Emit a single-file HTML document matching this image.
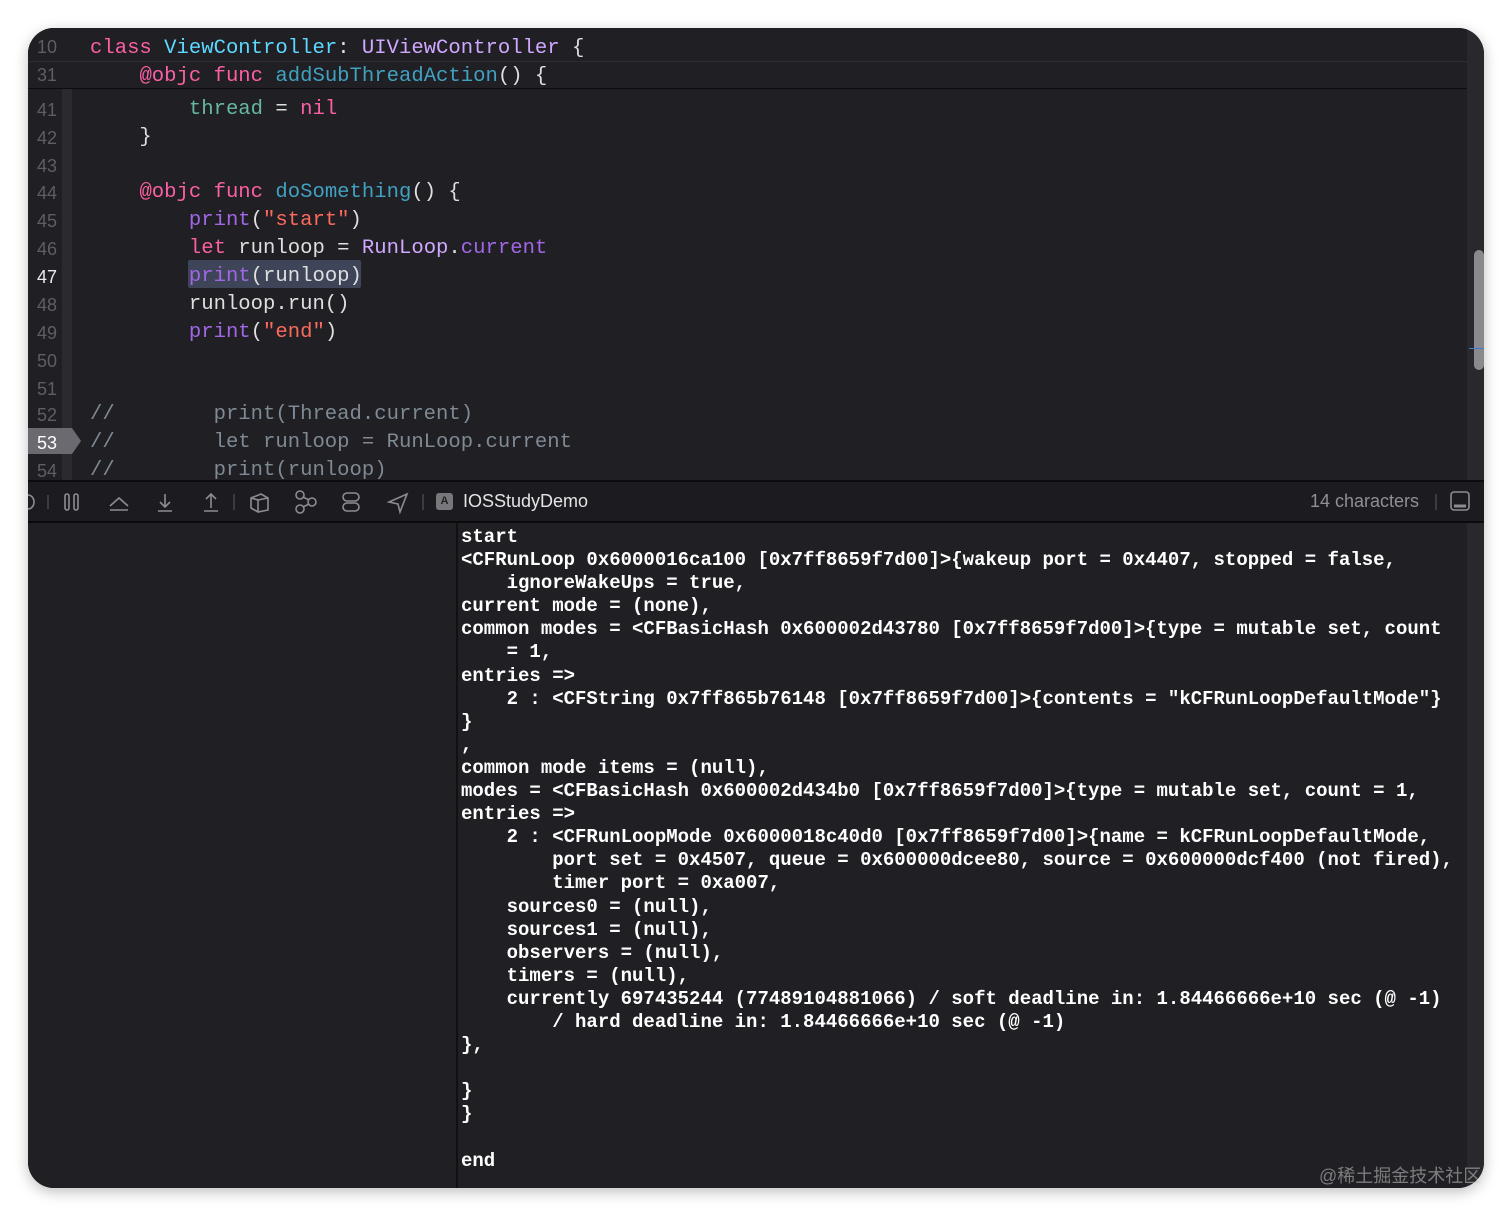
<!DOCTYPE html>
<html><head><meta charset="utf-8"><style>
*{margin:0;padding:0;box-sizing:border-box}
body{width:1512px;height:1216px;background:#fff;position:relative;overflow:hidden;font-family:"Liberation Mono",monospace}
#win{position:absolute;left:28px;top:28px;width:1456px;height:1160px;border-radius:26px;background:#1f1f24;overflow:hidden;box-shadow:0 4px 14px rgba(0,0,0,.25)}
.ed{position:absolute;left:0;top:0;width:1440px;height:452px;background:#1f1f24}
.ln{position:absolute;left:0;width:29px;text-align:right;font-size:18px;color:#5d5f66;font-family:"Liberation Sans Narrow","Liberation Sans",sans-serif;margin-top:2px}
.cl{position:absolute;left:62px;font-size:20.6px;white-space:pre;color:#dfdfe0;line-height:26px;margin-top:3px}
.k{color:#fc5fa3}.t{color:#5dd8ff}.p{color:#d0a8ff}.f{color:#41a1c0}.g{color:#67b7a4}.m{color:#a167e6}.s{color:#fc6a5d}.c{color:#7f8a94}
.hdr{position:absolute;left:0;top:0;width:1440px;height:61px;background:#1f1f24;border-bottom:1px solid #0c0c0e}
.gut{position:absolute;left:34px;top:61px;width:10px;height:391px;background:#2a2a2f}
#tb{position:absolute;left:0;top:452px;width:1456px;height:43px;background:#1c1c20;border-top:2px solid #0b0b0d;border-bottom:2px solid #0b0b0d;color:#8c8c91}
#con{position:absolute;left:428px;top:495px;width:1011px;height:665px;background:#1f1f24;border-left:2px solid #111}
#vars{position:absolute;left:0;top:495px;width:428px;height:665px;background:#1f1f24}
#strip{position:absolute;left:1439px;top:0;width:17px;height:1160px;background:#29292d}
pre{font-family:"Liberation Mono",monospace;font-weight:bold;font-size:19px;line-height:23.1px;color:#fff;position:absolute;left:3px;top:3px}
</style></head><body>
<div id="win">
<div class="ed">
<div class="gut"></div>
<div style="position:absolute;left:0;top:400px;width:44px;height:26px;background:#6a6a70"></div>
<div style="position:absolute;left:44px;top:400px;width:0;height:0;border-top:13px solid transparent;border-bottom:13px solid transparent;border-left:9px solid #6a6a70"></div>
<div class="hdr"></div>
<div style="position:absolute;left:0;top:33px;width:1440px;height:28px;border-top:1px solid #2c2c31"></div>
<div class="ln" style="top:7px">10</div><div class="cl" style="top:5px"><span class="k">class</span> <span class="t">ViewController</span>: <span class="p">UIViewController</span> {</div>
<div class="ln" style="top:35px">31</div><div class="cl" style="top:33px">    <span class="k">@objc</span> <span class="k">func</span> <span class="f">addSubThreadAction</span>() {</div>
<div class="ln" style="top:70px">41</div><div class="cl" style="top:66px">        <span class="g">thread</span> = <span class="k">nil</span></div>
<div class="ln" style="top:98px">42</div><div class="cl" style="top:94px">    }</div>
<div class="ln" style="top:126px">43</div>
<div class="ln" style="top:153px">44</div><div class="cl" style="top:149px">    <span class="k">@objc</span> <span class="k">func</span> <span class="f">doSomething</span>() {</div>
<div class="ln" style="top:181px">45</div><div class="cl" style="top:177px">        <span class="m">print</span>(<span class="s">"start"</span>)</div>
<div class="ln" style="top:209px">46</div><div class="cl" style="top:205px">        <span class="k">let</span> runloop = <span class="p">RunLoop</span>.<span class="m">current</span></div>
<div style="position:absolute;left:160px;top:232px;width:173px;height:28px;background:#3f4558;border-radius:2px"></div>
<div class="ln" style="top:237px;color:#e8e8ea">47</div><div class="cl" style="top:233px">        <span class="m">print</span>(runloop)</div>
<div class="ln" style="top:265px">48</div><div class="cl" style="top:261px">        runloop.run()</div>
<div class="ln" style="top:293px">49</div><div class="cl" style="top:289px">        <span class="m">print</span>(<span class="s">"end"</span>)</div>
<div class="ln" style="top:321px">50</div>
<div class="ln" style="top:349px">51</div>
<div class="ln" style="top:375px">52</div><div class="cl c" style="top:371px">//        print(Thread.current)</div>
<div class="ln" style="top:403px;color:#fff">53</div><div class="cl c" style="top:399px">//        let runloop = RunLoop.current</div>
<div class="ln" style="top:431px">54</div><div class="cl c" style="top:427px">//        print(runloop)</div>
</div>
<div id="strip"><div style="position:absolute;left:7px;top:222px;width:10px;height:120px;border-radius:5px;background:#8a8a8e"></div><div style="position:absolute;left:2px;top:320px;width:15px;height:1px;background:#3a7bd5"></div></div>
<div id="tb">
<svg width="1456" height="39" style="position:absolute;left:0;top:0" fill="none" stroke="#8c8c91" stroke-width="1.6">
<path d="M0 13 A6 7 0 0 1 0 27"/><line x1="20" y1="13" x2="20" y2="27" stroke="#444"/>
<rect x="37" y="12" width="4" height="16" rx="2"/><rect x="46" y="12" width="4" height="16" rx="2"/>
<path d="M82 24 L91 16 L100 24 M82 28 H100" /><path d="M137 12 V24 M132 20 L137 25 L142 20 M130 29 H144"/>
<path d="M183 26 V13 M178 17 L183 12 L188 17 M176 29 H190"/><line x1="206" y1="12" x2="206" y2="28" stroke="#444"/>
<path d="M223 16 L233 12 L240 16 V28 L230 30 L223 26 Z M230 30 V18 L223 16 M230 18 L240 16"/>
<circle cx="272" cy="13" r="4"/><circle cx="272" cy="27" r="4"/><circle cx="284" cy="20" r="4"/><path d="M275 15 L281 18 M275 25 L281 22"/>
<rect x="315" y="11" width="16" height="8" rx="4"/><rect x="315" y="21" width="16" height="8" rx="4"/>
<path d="M361 20 L379 12 L372 30 L370 22 Z"/><line x1="395" y1="12" x2="395" y2="28" stroke="#444"/>
<rect x="1423" y="10" width="18" height="18" rx="3"/><line x1="1426" y1="24" x2="1438" y2="24" stroke-width="3"/>
<line x1="1408" y1="12" x2="1408" y2="28" stroke="#444"/>
</svg>
<div style="position:absolute;left:408px;top:11px;width:17px;height:17px;background:#77777c;border-radius:3px;color:#222;font:bold 11px 'Liberation Sans',sans-serif;text-align:center;line-height:17px">A</div>
<div style="position:absolute;left:435px;top:9px;font:18px 'Liberation Sans',sans-serif;color:#e4e4e6">IOSStudyDemo</div>
<div style="position:absolute;left:1282px;top:9px;font:18px 'Liberation Sans',sans-serif;color:#8f8f94">14 characters</div>
</div>
<div id="vars"></div>
<div id="con"><pre>start
&lt;CFRunLoop 0x6000016ca100 [0x7ff8659f7d00]&gt;{wakeup port = 0x4407, stopped = false,
    ignoreWakeUps = true,
current mode = (none),
common modes = &lt;CFBasicHash 0x600002d43780 [0x7ff8659f7d00]&gt;{type = mutable set, count
    = 1,
entries =&gt;
    2 : &lt;CFString 0x7ff865b76148 [0x7ff8659f7d00]&gt;{contents = "kCFRunLoopDefaultMode"}
}
,
common mode items = (null),
modes = &lt;CFBasicHash 0x600002d434b0 [0x7ff8659f7d00]&gt;{type = mutable set, count = 1,
entries =&gt;
    2 : &lt;CFRunLoopMode 0x6000018c40d0 [0x7ff8659f7d00]&gt;{name = kCFRunLoopDefaultMode,
        port set = 0x4507, queue = 0x600000dcee80, source = 0x600000dcf400 (not fired),
        timer port = 0xa007,
    sources0 = (null),
    sources1 = (null),
    observers = (null),
    timers = (null),
    currently 697435244 (77489104881066) / soft deadline in: 1.84466666e+10 sec (@ -1)
        / hard deadline in: 1.84466666e+10 sec (@ -1)
},

}
}

end</pre></div>
</div>
<div style="position:absolute;left:1319px;top:1162px;font:18px 'Liberation Sans','Noto Sans CJK SC',sans-serif;color:rgba(200,200,200,.55)">@稀土掘金技术社区</div>
</body></html>
